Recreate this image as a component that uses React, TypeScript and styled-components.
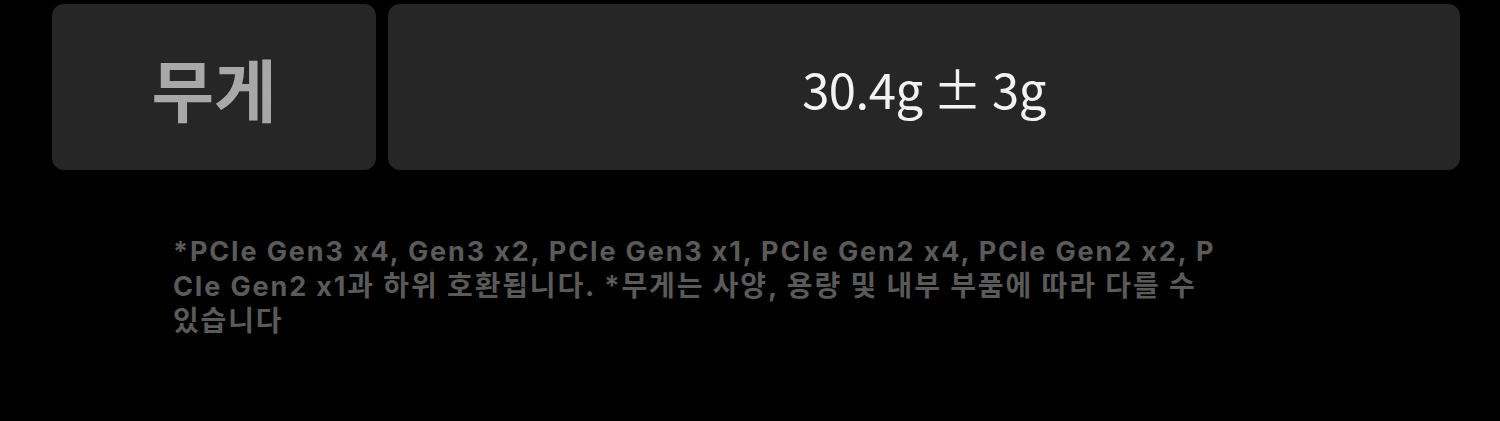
import React from 'react';
import styled, { createGlobalStyle } from 'styled-components';

const GlobalStyle = createGlobalStyle`
  html, body {
    margin: 0;
    padding: 0;
    background: #000;
  }
  body {
    font-family: Inter, "Noto Sans CJK KR", sans-serif;
  }
`;

const Page = styled.div`
  width: 1500px;
  height: 421px;
  background: #000;
  box-sizing: border-box;
  padding: 4px 40px 0 52px;
`;

const SpecRow = styled.div`
  display: grid;
  grid-template-columns: 324px 1fr;
  gap: 12px;
  height: 166px;
`;

const Cell = styled.div<{ $label?: boolean }>`
  background: #262626;
  border-radius: 12px;
  display: flex;
  align-items: center;
  justify-content: center;
  font-family: "Noto Sans CJK KR", sans-serif;
  color: ${(p) => (p.$label ? '#a8a8a8' : '#f2f2f2')};
  font-size: ${(p) => (p.$label ? '68px' : '49px')};
  font-weight: ${(p) => (p.$label ? 700 : 400)};
  letter-spacing: ${(p) => (p.$label ? '0' : '-0.5px')};
`;

const Note = styled.p`
  margin: 65px 0 0 121px;
  width: 1046px;
  font-size: 27px;
  line-height: 34px;
  font-weight: 700;
  letter-spacing: 1.85px;
  color: #5a5a5a;
  word-break: break-all;
  font-feature-settings: "calt" 0;
`;

// hangul runs in the reference set a touch wider than the latin ones
const Hangul = styled.span`
  font-size: 28px;
`;

const App = () => (
  <>
    <GlobalStyle />
    <Page>
      <SpecRow>
        <Cell $label>무게</Cell>
        <Cell>30.4g ± 3g</Cell>
      </SpecRow>
      <Note>
        *PCIe Gen3 x4, Gen3 x2, PCIe Gen3 x1, PCIe Gen2 x4, PCIe Gen2 x2, PCIe
        Gen2 x1
        <Hangul>
          과 하위 호환됩니다. *무게는 사양, 용량 및 내부 부품에 따라 다를 수
          있습니다
        </Hangul>
      </Note>
    </Page>
  </>
);

export default App;
